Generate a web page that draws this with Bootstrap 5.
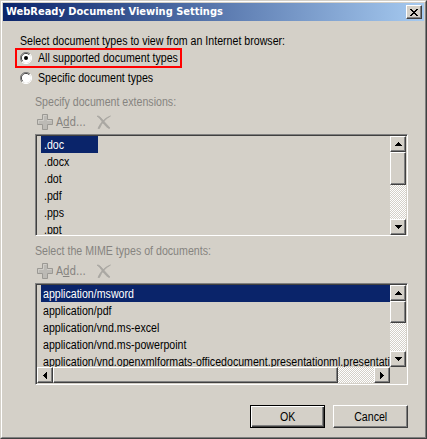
<!DOCTYPE html>
<html lang="en">
<head>
<meta charset="utf-8">
<title>WebReady Document Viewing Settings</title>
<link rel="stylesheet" href="https://cdn.jsdelivr.net/npm/bootstrap@5.3.0/dist/css/bootstrap.min.css">
<style>
:root{--face:#d4d0c8;--navy:#0a246a;--shade:#808080;--deep:#404040}
body{margin:0;background:var(--face);font:12px/17px "Liberation Sans",Arial,sans-serif;color:#000;overflow:hidden}
svg{flex:none}
.window-frame{width:427px;height:439px;border:1px solid;border-color:var(--face) var(--deep) var(--deep) var(--face)}
.dialog{width:425px;height:437px;background:var(--face);padding:1px 0 0 1px;border:1px solid;border-color:#fff var(--shade) var(--shade) #fff}
.caption{height:18px;width:421px;padding:0 2px 0 3px;background:linear-gradient(90deg,#0a246a,#a6caf0)}
.caption-text{font:bold 11px/18px "DejaVu Sans Condensed","DejaVu Sans",sans-serif;color:#fff;white-space:nowrap}
.bevel{background:var(--face);border:1px solid;border-color:#fff var(--deep) var(--deep) #fff;box-shadow:inset -1px -1px var(--shade);border-radius:0;padding:0;color:#000;display:flex;align-items:center;justify-content:center;flex:none}
.close-box{width:16px;height:14px}
.t{display:inline-block;white-space:nowrap;transform:scaleX(.885);transform-origin:0 50%}
.t-center{transform-origin:50% 50%;padding-top:1px}
.body-area{padding:11px 0 0 15px}
.intro{height:16px;padding-left:2px}
.intro .t{padding-top:1px}
.choice{height:20px;padding-left:2px}
.choice .t{margin-left:6px;padding-top:1px}
.choice-framed{width:167px;height:20px;border:2px solid #f00;margin-left:-3px;padding-left:3px}
.section{width:373px;margin-left:17px}
.muted-text{color:#868480}
.tools{height:22px;padding:0 0 2px 2px;color:#868480}
.tools-label{font:11.5px/20px "DejaVu Sans Condensed","DejaVu Sans",sans-serif;margin-left:3px;width:40px;white-space:nowrap}
.listbox{width:373px;height:102px;border:1px solid;border-color:var(--shade) #fff #fff var(--shade);box-shadow:inset 1px 1px var(--deep);padding:1px 0 0 1px}
.items{width:353px;overflow:hidden;padding-left:4px;flex:none}
.item{height:17px;padding-left:2px;line-height:19px}
.picked{background:var(--navy);color:#fff}
.short .item{padding-left:3px}
.short .picked{width:57px}
.vbar{width:16px;flex:none}
.knob{width:16px;height:16px}
.track{background:repeating-conic-gradient(#fff 0 25%,var(--face) 0 50%) 0 0/2px 2px}
.thumb-a{height:33px}.thumb-b{height:22px}
.thumb-h{width:285px;height:16px}
.cmd{width:75px;height:23px}
.cmd-default{border-color:#000;box-shadow:inset 1px 1px #fff,inset -1px -1px var(--deep),inset -2px -2px var(--shade)}
.sec-a{padding-top:6px}.label-a{height:18px;line-height:17px}
.sec-b{padding-top:7px}.label-b{height:18px;line-height:16px}
.list-top,.list-top .items{height:82px}
.hbar{width:353px;height:16px}
.short{height:98px}
.actions{gap:8px;margin:20px 0 0 232px}
</style>
</head>
<body>
<svg class="d-none">
<symbol id="plus" viewBox="0 0 16 16"><path d="M5.5.5h5v5h5v5h-5v5h-5v-5h-5v-5h5z" fill="#bcbab5" stroke="#9b9994"/><path d="M6.500 6.500v-5h3M1.500 9.500v-3h5M10 6.500h4.500" fill="none" stroke="#d0cec9"/></symbol>
<symbol id="cross" viewBox="0 0 16 15"><path d="M1 1.200C3.500 .500 5 3 8 6.500L14 13 13 13.500C10 12 8.500 9.500 7 8 5 5 3 2 1 1.200z" fill="#a9a7a2" stroke="#a9a7a2" stroke-width=".8"/><path d="M14.500 1C10 3.500 5.500 8 3.500 13.500L2 13.500C4 8.500 8.500 3 14.500 1z" fill="#a9a7a2" stroke="#a9a7a2" stroke-width=".8"/></symbol>
<symbol id="radio" viewBox="0 0 12 12"><circle cx="6" cy="6" r="5" fill="#fff"/><path d="M2 10A5.500 5.500 0 0 1 10 2" fill="none" stroke="#808080"/><path d="M2.700 9.200A4.500 4.500 0 0 1 9.200 2.700" fill="none" stroke="#404040"/><path d="M10 2A5.500 5.500 0 0 1 2 10" fill="none" stroke="#fff"/></symbol>
<symbol id="up" viewBox="0 0 7 4"><path d="M3 0h1v1h1v1h1v1h1v1H0V3h1V2h1V1h1z"/></symbol>
<symbol id="down" viewBox="0 0 7 4"><path d="M0 0h7v1H6v1H5v1H4v1H3V3H2V2H1V1H0z"/></symbol>
<symbol id="left" viewBox="0 0 4 7"><path d="M4 0v7H3V6H2V5H1V4H0V3h1V2h1V1h1V0z"/></symbol>
<symbol id="right" viewBox="0 0 4 7"><path d="M0 0h1v1h1v1h1v1h1v1H3v1H2v1H1v1H0z"/></symbol>
</svg>
<div class="window-frame"><div class="dialog">
<div class="caption d-flex align-items-center justify-content-between"><span class="caption-text">WebReady Document Viewing Settings</span><button class="bevel close-box" aria-label="Close"><svg width="8" height="7" viewBox="0 0 8 7" shape-rendering="crispEdges"><path d="M0 0h2v1h1v1h2V1h1V0h2v1H7v1H6v1H5v1h1v1h1v1h1v1H6V6H5V5H3v1H2v1H0V6h1V5h1V4h1V3H2V2H1V1H0z"/></svg></button></div>
<div class="body-area">
<div class="intro"><span class="t">Select document types to view from an Internet browser:</span></div>
<div class="choice choice-framed d-flex align-items-center"><svg width="12" height="12"><use href="#radio"/><circle cx="6" cy="6" r="2"/></svg><span class="t">All supported document types</span></div>
<div class="choice d-flex align-items-center"><svg width="12" height="12"><use href="#radio"/></svg><span class="t">Specific document types</span></div>

<div class="section sec-a">
<div class="label-a muted-text"><span class="t">Specify document extensions:</span></div>
<div class="tools d-flex align-items-center"><svg width="16" height="16"><use href="#plus"/></svg><span class="tools-label">A<u>d</u>d...</span><svg width="16" height="15"><use href="#cross"/></svg></div>
<div class="listbox d-flex">
<div class="items short"><div class="item picked"><span class="t">.doc</span></div><div class="item"><span class="t">.docx</span></div><div class="item"><span class="t">.dot</span></div><div class="item"><span class="t">.pdf</span></div><div class="item"><span class="t">.pps</span></div><div class="item"><span class="t">.ppt</span></div></div>
<div class="vbar d-flex flex-column"><div class="bevel knob"><svg width="7" height="4"><use href="#up"/></svg></div><div class="bevel thumb-a"></div><div class="track flex-grow-1"></div><div class="bevel knob"><svg width="7" height="4"><use href="#down"/></svg></div></div>
</div>
</div>

<div class="section sec-b">
<div class="label-b muted-text"><span class="t">Select the MIME types of documents:</span></div>
<div class="tools d-flex align-items-center"><svg width="16" height="16"><use href="#plus"/></svg><span class="tools-label">A<u>d</u>d...</span><svg width="16" height="15"><use href="#cross"/></svg></div>
<div class="listbox">
<div class="d-flex list-top"><div class="items"><div class="item picked"><span class="t">application/msword</span></div><div class="item"><span class="t">application/pdf</span></div><div class="item"><span class="t">application/vnd.ms-excel</span></div><div class="item"><span class="t">application/vnd.ms-powerpoint</span></div><div class="item"><span class="t">application/vnd.openxmlformats-officedocument.presentationml.presentation</span></div></div>
<div class="vbar d-flex flex-column"><div class="bevel knob"><svg width="7" height="4"><use href="#up"/></svg></div><div class="bevel thumb-b"></div><div class="track flex-grow-1"></div><div class="bevel knob"><svg width="7" height="4"><use href="#down"/></svg></div></div></div>
<div class="hbar d-flex"><div class="bevel knob"><svg width="4" height="7"><use href="#left"/></svg></div><div class="bevel thumb-h"></div><div class="track flex-grow-1"></div><div class="bevel knob"><svg width="4" height="7"><use href="#right"/></svg></div></div>
</div>
</div>
<div class="actions d-flex"><button class="bevel cmd cmd-default"><span class="t t-center">OK</span></button><button class="bevel cmd"><span class="t t-center">Cancel</span></button></div>
</div>
</div></div>
<script src="https://cdn.jsdelivr.net/npm/bootstrap@5.3.0/dist/js/bootstrap.bundle.min.js"></script>
</body>
</html>
